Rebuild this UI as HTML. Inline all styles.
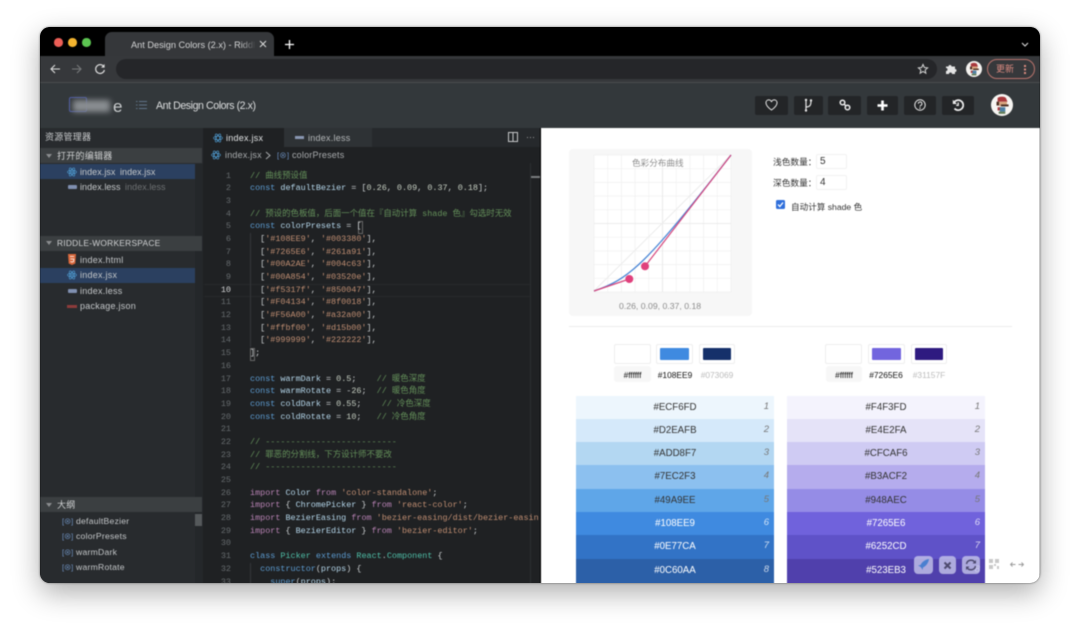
<!DOCTYPE html>
<html lang="zh">
<head>
<meta charset="utf-8">
<title>Ant Design Colors (2.x)</title>
<style>
html,body{margin:0;padding:0;background:#fff;width:1080px;height:636px;overflow:hidden}
*{box-sizing:border-box}
body{font-family:"Liberation Sans","Noto Sans CJK SC",sans-serif;position:relative}
#win{position:absolute;left:40px;top:27px;width:1000px;height:556px;border-radius:10px;overflow:hidden;box-shadow:0 10px 28px rgba(0,0,0,.32),0 0 2px rgba(0,0,0,.5);background:#000}
#in{position:absolute;left:-40px;top:-27px;width:1080px;height:636px;filter:blur(.42px)}
.a{position:absolute}
.t{position:absolute;white-space:nowrap;line-height:12px}
.side{font-size:9px;color:#c4c7c9;letter-spacing:.25px}
.hdr{position:absolute;left:40px;width:162px;height:15px;background:#3b3f41}
.tri{position:absolute;left:46px;width:0;height:0;border-left:3px solid transparent;border-right:3px solid transparent;border-top:4px solid #8a8d8f}
.btn{position:absolute;top:96px;height:19px;background:#232527;border-radius:2px}
#code{position:absolute;left:250px;top:169.500px;margin:0;font:8.45px/12.69px "Liberation Mono","Noto Sans CJK SC",monospace;color:#c8ccce;white-space:pre;width:289px;height:414px;overflow:hidden}
#nums{position:absolute;left:205px;top:169.500px;width:26px;margin:0;font:8.45px/12.69px "Liberation Mono",monospace;color:#666b6e;text-align:right;white-space:pre}
.k{color:#5c9bd0}.v{color:#b4d6ea}.c{color:#64905a}.s{color:#c08e72}.i{color:#b983b5}.g{color:#4fbfa8}.f{color:#d6d6a8}.n{color:#c6cfc2}
.row{position:absolute;height:24px;width:198px;text-align:center;font-size:9.7px;line-height:23px;color:#333}
.row i{position:absolute;right:5px;top:-1px;font-size:9.5px;color:#777}
.row.w{color:#fff}.row.w i{color:rgba(255,255,255,.75)}
.sw{position:absolute;top:344px;width:37px;height:20px;background:#fff;border:1px solid #eee;border-radius:2px}
.sw b{position:absolute;left:3px;top:3px;width:29px;height:12px;border-radius:1px}
.lb{position:absolute;top:369px;font-size:8.4px;line-height:12px;color:#111;white-space:nowrap;transform:translateX(-50%)}
.fb{position:absolute;top:556px;height:18px;background:rgba(200,200,235,.78);border-radius:4px}
.ol{display:inline-block;width:14px;color:#6f93c4;font-size:7.5px;letter-spacing:-.2px}
</style>
</head>
<body>
<div id="win"><div id="in">

<!-- tab strip -->
<div class="a" style="left:40px;top:27px;width:1000px;height:29px;background:#000"></div>
<div class="a" style="left:54px;top:38px;width:8.5px;height:8.5px;border-radius:50%;background:#ec5f57"></div>
<div class="a" style="left:68px;top:38px;width:8.5px;height:8.5px;border-radius:50%;background:#f4b42f"></div>
<div class="a" style="left:82px;top:38px;width:8.5px;height:8.5px;border-radius:50%;background:#5cc551"></div>
<div class="a" style="left:105px;top:32px;width:169px;height:24px;background:#35373a;border-radius:7px 7px 0 0"></div>
<div class="t" style="left:131px;top:39px;font-size:9.2px;color:#d4d5d6;width:124px;overflow:hidden">Ant Design Colors (2.x) - Riddle</div>
<div class="a" style="left:240px;top:36px;width:16px;height:16px;background:linear-gradient(90deg,rgba(53,55,58,0),#35373a)"></div>
<svg class="a" style="left:259px;top:40px" width="8" height="8" viewBox="0 0 8 8"><path d="M1 1l6 6M7 1l-6 6" stroke="#ddd" stroke-width="1"/></svg>
<svg class="a" style="left:284px;top:39px" width="11" height="11" viewBox="0 0 11 11"><path d="M5.500 1v9M1 5.500h9" stroke="#fff" stroke-width="1.300"/></svg>
<svg class="a" style="left:1021px;top:42px" width="8" height="5" viewBox="0 0 8 5"><path d="M1 1l3 3 3-3" fill="none" stroke="#ddd" stroke-width="1.100"/></svg>

<!-- toolbar -->
<div class="a" style="left:40px;top:56px;width:1000px;height:27px;background:#36383b;border-bottom:1px solid #4a4c4e"></div>
<svg class="a" style="left:49px;top:63px" width="12" height="12" viewBox="0 0 12 12"><path d="M11 6H2M6 2L2 6l4 4" fill="none" stroke="#dcdcdc" stroke-width="1.100"/></svg>
<svg class="a" style="left:71px;top:63px" width="12" height="12" viewBox="0 0 12 12"><path d="M1 6h9M6 2l4 4-4 4" fill="none" stroke="#77797b" stroke-width="1.100"/></svg>
<svg class="a" style="left:94px;top:63px" width="12" height="12" viewBox="0 0 12 12"><path d="M10 4A4.400 4.400 0 1 0 10.400 7" fill="none" stroke="#dcdcdc" stroke-width="1.200"/><path d="M10.600 1v3.600H7z" fill="#dcdcdc"/></svg>
<div class="a" style="left:116px;top:59px;width:821px;height:20px;border-radius:10px;background:#252629"></div>
<svg class="a" style="left:917px;top:63px" width="12" height="12" viewBox="0 0 24 24"><path d="M12 3l2.700 6 6.500.7-4.900 4.300 1.400 6.400L12 17l-5.700 3.400 1.400-6.400L2.800 9.700 9.300 9z" fill="none" stroke="#d5d5d5" stroke-width="2"/></svg>
<svg class="a" style="left:945px;top:63px" width="12" height="12" viewBox="0 0 12 12"><path d="M1 3.500h2.500a1.500 1.500 0 1 1 3 0H10V6a1.500 1.500 0 1 1 0 3v2H7a1.500 1.500 0 1 0-3 0H1V8a1.500 1.500 0 1 0 0-3z" fill="#e4e4e4"/></svg>
<svg class="a" style="left:966px;top:61px" width="16" height="16" viewBox="0 0 20 20"><circle cx="10" cy="10" r="10" fill="#f4f2ef"/><path d="M6 3.500c2-1.500 6-1.500 7.500 0L15 7H6z" fill="#a8383c"/><rect x="5" y="7" width="2.500" height="3.500" fill="#4c2e22"/><rect x="7.500" y="7" width="7" height="4" fill="#d9a57e"/><rect x="9" y="9.500" width="7" height="1.800" fill="#4c2e22"/><rect x="6" y="12" width="3" height="3" fill="#a8383c"/><rect x="8" y="12" width="5" height="4" fill="#4d7fa3"/><rect x="7" y="16" width="6" height="2" fill="#5f7a55"/></svg>
<div class="a" style="left:987px;top:59px;width:48px;height:20px;border:1px solid #b9736c;border-radius:10px"></div>
<div class="t" style="left:996px;top:63px;font-size:9px;color:#d98a80">更新</div>
<div class="a" style="left:1024px;top:65px;width:1.500px;height:1.500px;background:#d98a80;box-shadow:0 3.500px 0 #d98a80,0 7px 0 #d98a80"></div>

<!-- app header -->
<div class="a" style="left:40px;top:83px;width:1000px;height:45px;background:#33383b"></div>
<div class="a" style="left:69px;top:97px;width:18px;height:15px;border:1px solid #4c5aa5;border-radius:2px"></div>
<div class="a" style="left:73px;top:100px;width:37px;height:12px;background:#8a8e92;filter:blur(3px)"></div>
<div class="t" style="left:113px;top:99px;font-size:17px;line-height:15px;color:#c9ccce">e</div>
<svg class="a" style="left:136px;top:100px" width="11" height="10" viewBox="0 0 11 10"><path d="M0 1.500h1.500M3 1.500h8M0 5h1.500M3 5h8M0 8.500h1.500M3 8.500h8" stroke="#5f7388" stroke-width="1"/></svg>
<div class="t" style="left:156px;top:99.500px;font-size:10.600px;letter-spacing:-.43px;color:#dcdedf">Ant Design Colors (2.x)</div>

<div class="btn" style="left:755px;width:33px"></div>
<svg class="a" style="left:765px;top:99px" width="13" height="12" viewBox="0 0 13 12"><path d="M6.500 11C3 8.500 1 6.500 1 4a2.800 2.800 0 0 1 5.500-1A2.800 2.800 0 0 1 12 4c0 2.500-2 4.500-5.500 7z" fill="none" stroke="#e6e6e6" stroke-width="1"/></svg>
<div class="btn" style="left:794px;width:29px"></div>
<svg class="a" style="left:803px;top:98px" width="11" height="15" viewBox="0 0 11 15"><path d="M3 1.500V13M3 9c4 0 5-2 5-6" fill="none" stroke="#e6e6e6" stroke-width="1.200"/><circle cx="3" cy="2" r="1.200" fill="#e6e6e6"/><circle cx="8" cy="2.500" r="1.200" fill="#e6e6e6"/><circle cx="3" cy="12.500" r="1.200" fill="#e6e6e6"/></svg>
<div class="btn" style="left:828px;width:33px"></div>
<svg class="a" style="left:839px;top:99px" width="12" height="12" viewBox="0 0 12 12"><circle cx="3.500" cy="3.500" r="2.300" fill="none" stroke="#eee" stroke-width="1.500"/><circle cx="8.500" cy="8.500" r="2.300" fill="none" stroke="#eee" stroke-width="1.500"/><path d="M5 5l2 2" stroke="#eee" stroke-width="1.500"/></svg>
<div class="btn" style="left:867px;width:31px"></div>
<svg class="a" style="left:877px;top:100px" width="11" height="11" viewBox="0 0 11 11"><path d="M5.500.5v10M.5 5.500h10" stroke="#fff" stroke-width="2.600"/></svg>
<div class="btn" style="left:904px;width:32px"></div>
<svg class="a" style="left:914px;top:99px" width="12" height="12" viewBox="0 0 12 12"><circle cx="6" cy="6" r="5.200" fill="none" stroke="#e6e6e6" stroke-width="1"/><path d="M4.300 4.700a1.800 1.800 0 1 1 2.500 1.700C6.200 6.700 6 7 6 7.700" fill="none" stroke="#e6e6e6" stroke-width="1"/><circle cx="6" cy="9.200" r=".7" fill="#e6e6e6"/></svg>
<div class="btn" style="left:942px;width:32px"></div>
<svg class="a" style="left:952px;top:99px" width="12" height="12" viewBox="0 0 12 12"><path d="M2 3.500A5 5 0 1 1 2.500 9.500" fill="none" stroke="#eee" stroke-width="1.700"/><path d="M.8 .8V5h4.200z" fill="#eee"/><path d="M6.200 3.500V6.300H4.200" fill="none" stroke="#eee" stroke-width="1.300"/></svg>
<svg class="a" style="left:991px;top:94px" width="22" height="22" viewBox="0 0 20 20"><circle cx="10" cy="10" r="10" fill="#f7f5f2"/><path d="M6 3.500c2-1.500 6-1.500 7.500 0L15 7H6z" fill="#a8383c"/><rect x="5" y="7" width="2.500" height="3.500" fill="#4c2e22"/><rect x="7.500" y="7" width="7" height="4" fill="#d9a57e"/><rect x="9" y="9.500" width="7" height="1.800" fill="#4c2e22"/><rect x="6" y="12" width="3" height="3" fill="#a8383c"/><rect x="8" y="12" width="5" height="4" fill="#4d7fa3"/><rect x="7" y="16" width="6" height="2" fill="#5f7a55"/></svg>

<!-- sidebar -->
<div class="a" style="left:40px;top:128px;width:163px;height:456px;background:#282b2e"></div>
<div class="a" style="left:195px;top:164px;width:8px;height:420px;background:#24272a"></div>
<div class="t side" style="left:45px;top:131px;color:#c8cacc">资源管理器</div>

<div class="hdr" style="top:148px"></div>
<div class="tri" style="top:154px"></div>
<div class="t side" style="left:57px;top:150px;color:#d0d2d3">打开的编辑器</div>
<div class="a" style="left:40px;top:164px;width:155px;height:15px;background:#2b4060"></div>
<div class="t side" style="left:80px;top:166px;letter-spacing:.05px">index.jsx<span style="margin-left:4.500px">index.jsx</span></div>
<div class="t side" style="left:80px;top:181px;letter-spacing:.05px">index.less<span style="color:#6e7173;margin-left:4.500px">index.less</span></div>

<div class="hdr" style="top:236px"></div>
<div class="tri" style="top:241px"></div>
<div class="t side" style="left:57px;top:237px;font-size:8.400px;color:#d0d2d3">RIDDLE-WORKERSPACE</div>
<div class="a" style="left:40px;top:268px;width:155px;height:15px;background:#2b4060"></div>
<div class="t side" style="left:80px;top:254px">index.html</div>
<div class="t side" style="left:80px;top:269px">index.jsx</div>
<div class="t side" style="left:80px;top:285px">index.less</div>
<div class="t side" style="left:80px;top:300px">package.json</div>

<!-- file icons -->
<svg class="a" style="left:67px;top:167px" width="10" height="10" viewBox="0 0 10 10"><g fill="none" stroke="#4f9bd0" stroke-width=".7"><ellipse cx="5" cy="5" rx="4.500" ry="1.800"/><ellipse cx="5" cy="5" rx="4.500" ry="1.800" transform="rotate(60 5 5)"/><ellipse cx="5" cy="5" rx="4.500" ry="1.800" transform="rotate(120 5 5)"/></g><circle cx="5" cy="5" r=".9" fill="#4f9bd0"/></svg>
<svg class="a" style="left:67px;top:270px" width="10" height="10" viewBox="0 0 10 10"><g fill="none" stroke="#4f9bd0" stroke-width=".7"><ellipse cx="5" cy="5" rx="4.500" ry="1.800"/><ellipse cx="5" cy="5" rx="4.500" ry="1.800" transform="rotate(60 5 5)"/><ellipse cx="5" cy="5" rx="4.500" ry="1.800" transform="rotate(120 5 5)"/></g><circle cx="5" cy="5" r=".9" fill="#4f9bd0"/></svg>
<div class="a" style="left:68px;top:185px;width:9px;height:4px;background:#7f8fb0;border-radius:1px"></div>
<div class="a" style="left:68px;top:289px;width:9px;height:4px;background:#7f8fb0;border-radius:1px"></div>
<svg class="a" style="left:68px;top:254px" width="8" height="11" viewBox="0 0 8 11"><path d="M0 0h8l-.7 9.500L4 11 .7 9.500z" fill="#d9683c"/><path d="M2 2.500h4M2.300 5h3.500l-.2 2.500-1.600.6-1.600-.6" fill="none" stroke="#fff" stroke-width=".8"/></svg>
<div class="a" style="left:67px;top:304.500px;width:10px;height:3px;background:#8c3b3b"></div>

<div class="hdr" style="top:497px"></div>
<div class="tri" style="top:503px"></div>
<div class="t side" style="left:57px;top:499px;color:#d0d2d3">大纲</div>
<div class="a" style="left:195px;top:514px;width:7px;height:12px;background:#55595b"></div>
<div class="t side" style="left:62px;top:515px;font-size:8.600px"><span class="ol">[⊗]</span>defaultBezier</div>
<div class="t side" style="left:62px;top:530px;font-size:8.600px"><span class="ol">[⊗]</span>colorPresets</div>
<div class="t side" style="left:62px;top:546px;font-size:8.600px"><span class="ol">[⊗]</span>warmDark</div>
<div class="t side" style="left:62px;top:561px;font-size:8.600px"><span class="ol">[⊗]</span>warmRotate</div>

<!-- editor -->
<div class="a" style="left:203px;top:128px;width:337px;height:456px;background:#1f2123"></div>
<div class="a" style="left:203px;top:128px;width:337px;height:19px;background:#26292c"></div>
<div class="a" style="left:203px;top:128px;width:81px;height:19px;background:#1f2123"></div>
<div class="a" style="left:284px;top:128px;width:88px;height:19px;background:#2e3235"></div>
<svg class="a" style="left:213px;top:133px" width="10" height="10" viewBox="0 0 10 10"><g fill="none" stroke="#4f9bd0" stroke-width=".7"><ellipse cx="5" cy="5" rx="4.500" ry="1.800"/><ellipse cx="5" cy="5" rx="4.500" ry="1.800" transform="rotate(60 5 5)"/><ellipse cx="5" cy="5" rx="4.500" ry="1.800" transform="rotate(120 5 5)"/></g></svg>
<div class="t" style="left:226px;top:131.500px;font-size:9px;color:#e2e4e5;letter-spacing:.25px">index.jsx</div>
<div class="a" style="left:295px;top:136px;width:9px;height:3px;background:#8a97b2"></div>
<div class="t" style="left:308px;top:131.500px;font-size:9px;color:#b4b7b9;letter-spacing:.25px">index.less</div>
<svg class="a" style="left:508px;top:132px" width="10" height="10" viewBox="0 0 10 10"><rect x=".5" y=".5" width="9" height="9" fill="none" stroke="#c5c7c8"/><path d="M5 .5v9" stroke="#c5c7c8"/></svg>
<div class="t" style="left:526px;top:131px;font-size:9px;color:#aaa">···</div>
<svg class="a" style="left:211px;top:150px" width="10" height="10" viewBox="0 0 10 10"><g fill="none" stroke="#4f9bd0" stroke-width=".7"><ellipse cx="5" cy="5" rx="4.500" ry="1.800"/><ellipse cx="5" cy="5" rx="4.500" ry="1.800" transform="rotate(60 5 5)"/><ellipse cx="5" cy="5" rx="4.500" ry="1.800" transform="rotate(120 5 5)"/></g></svg>
<div class="t" style="left:225px;top:149px;font-size:9px;color:#a9acae;letter-spacing:.2px">index.jsx</div>
<svg class="a" style="left:265px;top:151px" width="7" height="9" viewBox="0 0 7 9"><path d="M1 1l4 3.500L1 8" fill="none" stroke="#a9acae"/></svg>
<div class="t" style="left:277px;top:149px;font-size:9px;color:#a9acae;letter-spacing:.2px"><span style="color:#6f93c4;font-size:7.500px">[⊗]</span> colorPresets</div>
<div class="a" style="left:204px;top:283.500px;width:326px;height:1px;background:#27292b"></div>
<div class="a" style="left:204px;top:295.500px;width:326px;height:1px;background:#27292b"></div>
<div class="a" style="left:530px;top:163px;width:1px;height:421px;background:#2b2e30"></div>
<div class="a" style="left:531px;top:176px;width:9px;height:1.500px;background:#7a7d7f"></div>
<div class="a" style="left:357.500px;top:220.500px;width:5px;height:13px;border:1px solid #666"></div>
<div class="a" style="left:249.500px;top:347.500px;width:5px;height:13px;border:1px solid #666"></div>
<div class="a" style="left:250px;top:233px;width:1px;height:114px;background:#33363a"></div>
<div class="a" style="left:250px;top:563px;width:1px;height:21px;background:#33363a"></div>

<pre id="nums">1
2
3
4
5
6
7
8
9
<span style="color:#d5d7d8">10</span>
11
12
13
14
15
16
17
18
19
20
21
22
23
24
25
26
27
28
29
30
31
32
33</pre>
<pre id="code"><span class="c">// 曲线预设值</span>
<span class="k">const</span> <span class="v">defaultBezier</span> = [<span class="n">0.26</span>, <span class="n">0.09</span>, <span class="n">0.37</span>, <span class="n">0.18</span>];

<span class="c">// 预设的色板值，后面一个值在『自动计算 shade 色』勾选时无效</span>
<span class="k">const</span> <span class="v">colorPresets</span> = [
  [<span class="s">'#108EE9'</span>, <span class="s">'#003380'</span>],
  [<span class="s">'#7265E6'</span>, <span class="s">'#261a91'</span>],
  [<span class="s">'#00A2AE'</span>, <span class="s">'#004c63'</span>],
  [<span class="s">'#00A854'</span>, <span class="s">'#03520e'</span>],
  [<span class="s">'#f5317f'</span>, <span class="s">'#850047'</span>],
  [<span class="s">'#F04134'</span>, <span class="s">'#8f0018'</span>],
  [<span class="s">'#F56A00'</span>, <span class="s">'#a32a00'</span>],
  [<span class="s">'#ffbf00'</span>, <span class="s">'#d15b00'</span>],
  [<span class="s">'#999999'</span>, <span class="s">'#222222'</span>],
];

<span class="k">const</span> <span class="v">warmDark</span> = <span class="n">0.5</span>;    <span class="c">// 暖色深度</span>
<span class="k">const</span> <span class="v">warmRotate</span> = -<span class="n">26</span>;  <span class="c">// 暖色角度</span>
<span class="k">const</span> <span class="v">coldDark</span> = <span class="n">0.55</span>;    <span class="c">// 冷色深度</span>
<span class="k">const</span> <span class="v">coldRotate</span> = <span class="n">10</span>;   <span class="c">// 冷色角度</span>

<span class="c">// --------------------------</span>
<span class="c">// 罪恶的分割线，下方设计师不要改</span>
<span class="c">// --------------------------</span>

<span class="i">import</span> <span class="v">Color</span> <span class="i">from</span> <span class="s">'color-standalone'</span>;
<span class="i">import</span> { <span class="v">ChromePicker</span> } <span class="i">from</span> <span class="s">'react-color'</span>;
<span class="i">import</span> <span class="v">BezierEasing</span> <span class="i">from</span> <span class="s">'bezier-easing/dist/bezier-easing'</span>;
<span class="i">import</span> { <span class="v">BezierEditor</span> } <span class="i">from</span> <span class="s">'bezier-editor'</span>;

<span class="k">class</span> <span class="g">Picker</span> <span class="k">extends</span> <span class="g">React</span>.<span class="g">Component</span> {
  <span class="k">constructor</span>(<span class="v">props</span>) {
    <span class="k">super</span>(<span class="v">props</span>);</pre>

<!-- right panel -->
<div class="a" style="left:541px;top:128px;width:499px;height:456px;background:#fff"></div>
<div class="a" style="left:569px;top:149px;width:183px;height:167px;background:#f7f7f7;border-radius:4px"></div>
<svg class="a" style="left:590px;top:150px" width="145" height="145" viewBox="590 150 145 145">
<rect x="594" y="155" width="137" height="137" fill="#fff"/>
<g stroke="#f0f0f0" stroke-width=".7">
<path d="M594 155v137M607.700 155v137M621.400 155v137M635.100 155v137M648.800 155v137M676.200 155v137M689.900 155v137M703.600 155v137M717.300 155v137M731 155v137"/>
<path d="M594 155h137M594 168.700h137M594 182.400h137M594 196.100h137M594 209.800h137M594 237.200h137M594 250.900h137M594 264.600h137M594 278.300h137M594 292h137"/>
</g>
<path d="M662.500 155v137M594 223.500h137" stroke="#e6e6e6" stroke-width=".8"/>
<path d="M594 291L731 155" stroke="#ececec" stroke-width="1"/>
<path d="M594 291C629 279 645 266 731 155" fill="none" stroke="#4a86d6" stroke-width="1.300"/>
<path d="M594 291L629.300 279M645 266.300L731 155" stroke="#d6477d" stroke-width="1.200"/>
<circle cx="629.300" cy="279" r="4" fill="#e0407c"/>
<circle cx="645" cy="266.300" r="4" fill="#e0407c"/>
</svg>
<div class="a" style="left:628px;top:156px;width:60px;height:12px;background:#fff"></div>
<div class="t" style="left:632px;top:157px;font-size:8.600px;color:#8c8c8c">色彩分布曲线</div>
<div class="t" style="left:619px;top:299.500px;font-size:8.700px;color:#8c8c8c">0.26, 0.09, 0.37, 0.18</div>

<div class="t" style="left:773px;top:156px;font-size:8.700px;color:#333">浅色数量：</div>
<div class="a" style="left:816px;top:154px;width:31px;height:15px;border:1px solid #f2f2f2;border-radius:2px"></div>
<div class="t" style="left:820px;top:156px;font-size:10px;color:#333">5</div>
<div class="t" style="left:773px;top:176.500px;font-size:8.700px;color:#333">深色数量：</div>
<div class="a" style="left:816px;top:175px;width:31px;height:15px;border:1px solid #f2f2f2;border-radius:2px"></div>
<div class="t" style="left:820px;top:176.500px;font-size:10px;color:#333">4</div>
<svg class="a" style="left:776px;top:200px" width="9" height="9" viewBox="0 0 9 9"><rect width="9" height="9" rx="1.500" fill="#2f6fdb"/><path d="M2 4.500l1.800 2L7 2.500" fill="none" stroke="#fff" stroke-width="1.300"/></svg>
<div class="t" style="left:791px;top:200.500px;font-size:8.600px;color:#333">自动计算 shade 色</div>

<div class="a" style="left:569px;top:326px;width:443px;height:1px;background:#ececec"></div>

<div class="sw" style="left:614px"></div>
<div class="sw" style="left:656px"><b style="background:#3f8ae0"></b></div>
<div class="sw" style="left:699px;width:36px"><b style="width:28px;background:#15306a"></b></div>
<div class="a" style="left:614px;top:366px;width:37px;height:16px;background:#f7f7f7;border-radius:3px"></div>
<div class="lb" style="left:632.500px">#ffffff</div>
<div class="lb" style="left:675px">#108EE9</div>
<div class="lb" style="left:717px;color:#bcbcbc">#073069</div>

<div class="sw" style="left:825px"></div>
<div class="sw" style="left:868px"><b style="background:#7265de"></b></div>
<div class="sw" style="left:911px;width:36px"><b style="width:28px;background:#2e1a80"></b></div>
<div class="a" style="left:826px;top:366px;width:36px;height:16px;background:#f7f7f7;border-radius:3px"></div>
<div class="lb" style="left:844px">#ffffff</div>
<div class="lb" style="left:886px">#7265E6</div>
<div class="lb" style="left:929px;color:#bcbcbc">#31157F</div>

<div class="row" style="left:576px;top:396px;background:#edf6fd">#ECF6FD<i>1</i></div>
<div class="row" style="left:576px;top:419px;background:#d5e9fa">#D2EAFB<i>2</i></div>
<div class="row" style="left:576px;top:442px;background:#b3d7f2">#ADD8F7<i>3</i></div>
<div class="row" style="left:576px;top:465px;background:#8cc0ef">#7EC2F3<i>4</i></div>
<div class="row" style="left:576px;top:488.500px;background:#5fa6e8">#49A9EE<i>5</i></div>
<div class="row w" style="left:576px;top:511.500px;background:#3f8ae0">#108EE9<i>6</i></div>
<div class="row w" style="left:576px;top:535px;background:#3273c6">#0E77CA<i>7</i></div>
<div class="row w" style="left:576px;top:558.500px;height:26px;line-height:24px;background:#2c60a8">#0C60AA<i>8</i></div>

<div class="row" style="left:787px;top:396px;background:#f4f3fd">#F4F3FD<i>1</i></div>
<div class="row" style="left:787px;top:419px;background:#e5e3f8">#E4E2FA<i>2</i></div>
<div class="row" style="left:787px;top:442px;background:#cfcbf3">#CFCAF6<i>3</i></div>
<div class="row" style="left:787px;top:465px;background:#b5aced">#B3ACF2<i>4</i></div>
<div class="row" style="left:787px;top:488.500px;background:#958ce6">#948AEC<i>5</i></div>
<div class="row w" style="left:787px;top:511.500px;background:#7062dc">#7265E6<i>6</i></div>
<div class="row w" style="left:787px;top:535px;background:#5f52c8">#6252CD<i>7</i></div>
<div class="row w" style="left:787px;top:558.500px;height:26px;line-height:24px;background:#5040ac">#523EB3<i>8</i></div>

<!-- floating tools -->
<div class="fb" style="left:914px;width:19px"></div>
<svg class="a" style="left:917px;top:558px" width="13" height="13" viewBox="0 0 13 13"><path d="M12 1C8 1.500 5 4 3.500 7L1 7.500l2 1 1.500 1.500 1 2L6 9.500C9 8 11.500 5 12 1z" fill="#4a7fd0"/></svg>
<div class="fb" style="left:939px;width:17px"></div>
<svg class="a" style="left:943px;top:561px" width="9" height="9" viewBox="0 0 9 9"><path d="M1.500 1.500l6 6M7.500 1.500l-6 6" stroke="#4d4a6e" stroke-width="2"/></svg>
<div class="fb" style="left:962px;width:18px"></div>
<svg class="a" style="left:965px;top:559px" width="12" height="12" viewBox="0 0 12 12"><path d="M1.500 5A4.600 4.600 0 0 1 10 3.500M10.500 7A4.600 4.600 0 0 1 2 8.500" fill="none" stroke="#4d4a6e" stroke-width="1.500"/><path d="M11 1v3.500H7.500zM1 11V7.500h3.500z" fill="#4d4a6e"/></svg>
<svg class="a" style="left:989px;top:559px" width="10" height="10" viewBox="0 0 10 10"><g fill="#c8c8c8"><rect width="4" height="4"/><rect x="6" width="4" height="4"/><rect y="6" width="4" height="4"/><rect x="5" y="5" width="2" height="2"/><rect x="8" y="7" width="2" height="3"/></g></svg>
<svg class="a" style="left:1010px;top:561px" width="14" height="7" viewBox="0 0 14 7"><path d="M.5 3.500h5M2.500 1.500l-2 2 2 2M8.500 3.500h5M11.500 1.500l2 2-2 2" fill="none" stroke="#9a9a9a" stroke-width=".9"/></svg>

</div></div>
</body>
</html>
